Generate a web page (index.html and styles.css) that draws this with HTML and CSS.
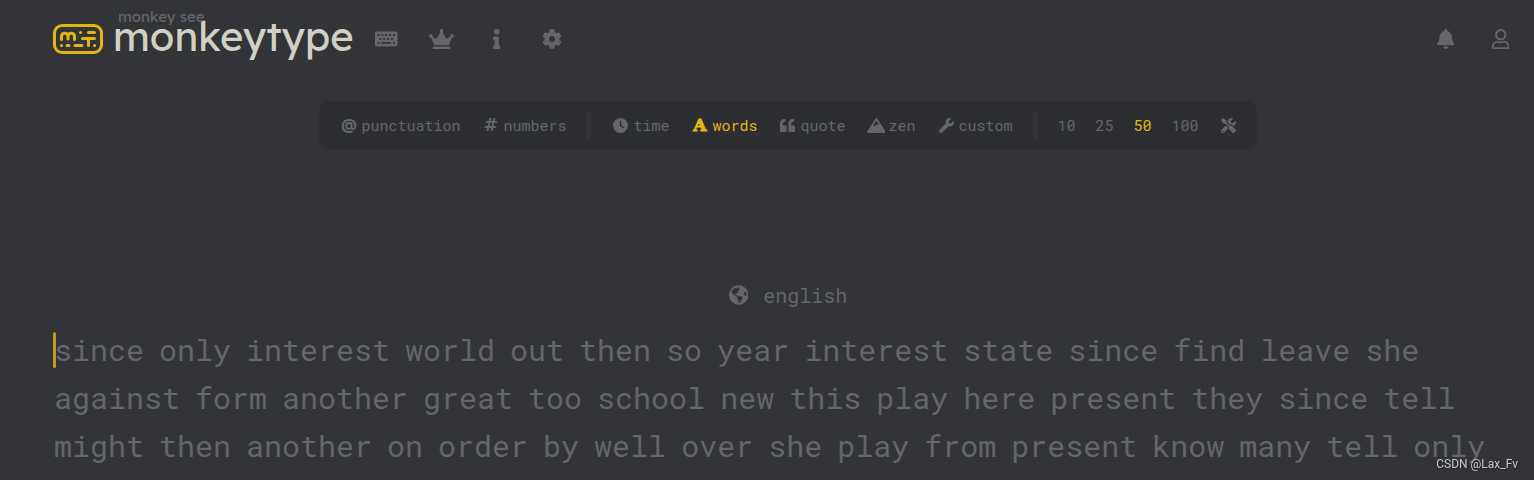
FILE: index.html
```html
<!DOCTYPE html>
<html lang="en">
<head>
    <meta charset="UTF-8">
    <title>Monkeytype</title>
    <meta name="viewport" content="width=device-width, initial-scale=1.0">
    <link rel="stylesheet" href="styles.css">
</head>
<body>

    <header>
        <a class="logo" href="#">
            <svg class="logo-icon" viewBox="0 0 50 30" width="50" height="30">
                <rect x="1.5" y="1.5" width="47" height="27" rx="7.5"/>
                <path d="M8.500 15.500V12a3.300 3.300 0 0 1 6.500 0V15M15 12a3.300 3.300 0 0 1 6.500 0v3.500M35.500 8.500H41.500M29.500 14.500h12M35.500 14.500V21.500M22 21.500h7M8.500 21.500h.1M14 21.500h.1M14 21.500h2M27.500 8.500h.1M41.500 21.500h.1"/>
            </svg>
            <span class="logo-text">
                <span class="top">monkey see</span>
                <span class="bottom">monkeytype</span>
            </span>
        </a>
        <nav>
            <button class="icon-button" aria-label="Start test">
                <svg viewBox="0 0 576 512" height="20"><path fill-rule="evenodd" d="M48 64h480a48 48 0 0 1 48 48v288a48 48 0 0 1-48 48H48a48 48 0 0 1-48-48V112a48 48 0 0 1 48-48zM65 130v50h50v-50zM163 130v50h50v-50zM262 130v50h50v-50zM360 130v50h50v-50zM459 130v50h50v-50zM114 230v50h50v-50zM212 230v50h50v-50zM311 230v50h50v-50zM410 230v50h50v-50zM65 330v50h50v-50zM163 330v50h247v-50zM459 330v50h50v-50z"/></svg>
            </button>
            <button class="icon-button" aria-label="Leaderboards">
                <svg viewBox="0 0 640 512" height="20"><path d="M528 448H112c-8.800 0-16 7.200-16 16v32c0 8.800 7.200 16 16 16h416c8.800 0 16-7.200 16-16v-32c0-8.800-7.200-16-16-16zm64-320c-26.500 0-48 21.500-48 48 0 7.100 1.600 13.700 4.400 19.800L476 239.200c-15.400 9.200-35.300 4-44.200-11.600L350.300 85C361 76.200 368 63 368 48c0-26.500-21.500-48-48-48s-48 21.500-48 48c0 15 7 28.200 17.700 37l-81.500 142.600c-8.900 15.600-28.900 20.800-44.200 11.600l-72.300-43.400c2.700-6 4.400-12.700 4.400-19.800 0-26.500-21.500-48-48-48S0 149.500 0 176s21.500 48 48 48c2.600 0 5.200-.4 7.700-.8L128 416h384l72.300-192.800c2.500.4 5.100.8 7.700.8 26.500 0 48-21.500 48-48s-21.500-48-48-48z"/></svg>
            </button>
            <button class="icon-button" aria-label="About">
                <svg viewBox="0 0 192 512" height="20"><circle cx="96" cy="72" r="72"/><rect y="192" width="152" height="88" rx="20"/><rect x="40" y="210" width="112" height="260"/><rect y="424" width="192" height="88" rx="20"/></svg>
            </button>
            <button class="icon-button" aria-label="Settings">
                <svg viewBox="0 0 512 512" height="20"><path d="M487.400 315.700l-42.600-24.600c4.300-23.200 4.300-47 0-70.200l42.600-24.600c4.900-2.800 7.100-8.600 5.500-14-11.100-35.600-30-67.800-54.700-94.600-3.800-4.100-10-5.100-14.800-2.300L380.800 110c-17.900-15.400-38.500-27.300-60.800-35.100V25.800c0-5.600-3.900-10.500-9.400-11.700-36.700-8.200-74.300-7.800-109.200 0-5.500 1.200-9.400 6.100-9.400 11.700V75c-22.200 7.900-42.800 19.800-60.800 35.100L88.700 85.500c-4.900-2.800-11-1.900-14.800 2.300-24.700 26.700-43.600 58.900-54.700 94.600-1.700 5.400.6 11.200 5.500 14L67.300 221c-4.300 23.200-4.300 47 0 70.200l-42.600 24.600c-4.900 2.800-7.100 8.600-5.500 14 11.100 35.600 30 67.800 54.700 94.600 3.800 4.100 10 5.100 14.800 2.300l42.600-24.600c17.900 15.400 38.500 27.300 60.800 35.100v49.200c0 5.600 3.900 10.500 9.400 11.700 36.700 8.200 74.300 7.800 109.200 0 5.500-1.200 9.400-6.100 9.400-11.700v-49.200c22.200-7.900 42.800-19.800 60.800-35.100l42.600 24.600c4.900 2.800 11 1.900 14.800-2.300 24.700-26.700 43.600-58.900 54.700-94.600 1.500-5.500-.7-11.300-5.600-14.100zM256 336c-44.100 0-80-35.900-80-80s35.900-80 80-80 80 35.900 80 80-35.900 80-80 80z"/></svg>
            </button>
        </nav>
        <div class="account">
            <button class="icon-button" aria-label="Notifications">
                <svg viewBox="0 0 448 512" height="20"><path d="M224 0c-17.700 0-32 14.300-32 32V51.200C119 66 64 130.600 64 208v18.800c0 47-17.300 92.400-48.500 127.600l-7.400 8.300c-8.400 9.400-10.400 22.900-5.300 34.400S19.400 416 32 416H416c12.600 0 24-7.400 29.200-18.900s3.100-25-5.300-34.400l-7.400-8.300C401.300 319.200 384 273.900 384 226.800V208c0-77.400-55-142-128-156.800V32c0-17.700-14.300-32-32-32zm45.300 493.300c12-12 18.700-28.300 18.700-45.300H224 160c0 17 6.700 33.300 18.700 45.300s28.300 18.700 45.300 18.700s33.300-6.700 45.300-18.700z"/></svg>
            </button>
            <button class="icon-button" aria-label="Account">
                <svg viewBox="0 0 448 512" height="20"><path d="M313.600 304c-28.700 0-42.500 16-89.600 16-47.100 0-60.800-16-89.600-16C60.200 304 0 364.200 0 438.400V464c0 26.500 21.500 48 48 48h352c26.500 0 48-21.500 48-48v-25.600c0-74.200-60.200-134.400-134.400-134.400zM400 464H48v-25.600c0-47.600 38.800-86.400 86.400-86.400 14.600 0 38.300 16 89.600 16 51.700 0 74.900-16 89.600-16 47.600 0 86.400 38.800 86.400 86.400V464zM224 288c79.500 0 144-64.500 144-144S303.500 0 224 0 80 64.500 80 144s64.500 144 144 144zm0-240c52.900 0 96 43.100 96 96s-43.100 96-96 96-96-43.100-96-96 43.100-96 96-96z"/></svg>
            </button>
        </div>
    </header>

    <main>
        <div class="config">
            <div class="group">
                <button><span class="icon at">@</span>punctuation</button>
                <button><span class="icon hash">#</span>numbers</button>
            </div>
            <div class="spacer"></div>
            <div class="group">
                <button><span class="icon"><svg viewBox="0 0 512 512" height="15"><path d="M256 0a256 256 0 1 1 0 512A256 256 0 1 1 256 0zM232 120V256c0 8 4 15.500 10.700 20l96 64c11 7.400 25.900 4.400 33.300-6.700s4.400-25.900-6.700-33.300L280 243.200V120c0-13.300-10.700-24-24-24s-24 10.700-24 24z"/></svg></span>time</button>
                <button class="active"><span class="icon slab">A</span>words</button>
                <button><span class="icon"><svg viewBox="0 0 512 512" height="15"><path d="M464 256h-80v-64c0-35.300 28.700-64 64-64h8c13.300 0 24-10.700 24-24V56c0-13.300-10.700-24-24-24h-8c-88.400 0-160 71.600-160 160v240c0 26.500 21.500 48 48 48h128c26.500 0 48-21.500 48-48V304c0-26.500-21.500-48-48-48zm-288 0H96v-64c0-35.300 28.700-64 64-64h8c13.300 0 24-10.700 24-24V56c0-13.300-10.700-24-24-24h-8C71.600 32 0 103.600 0 192v240c0 26.500 21.500 48 48 48h128c26.500 0 48-21.500 48-48V304c0-26.500-21.500-48-48-48z"/></svg></span>quote</button>
                <button><span class="icon"><svg viewBox="0 0 640 512" height="15"><path d="M634.900 462.700l-288-448C341 5.500 330.900 0 320 0s-21 5.500-26.900 14.700l-288 448a32 32 0 0 0-1.200 32.600A32 32 0 0 0 32 512h576c11.700 0 22.500-6.400 28.100-16.700a32 32 0 0 0-1.200-32.600zM320 91.200L405.400 224H320l-64 64-38-38L320 91.200z"/></svg></span>zen</button>
                <button><span class="icon"><svg viewBox="0 0 512 512" height="15"><path d="M507.700 109.100c-2.200-9-13.500-12.100-20.100-5.500l-74.400 74.400-67.900-11.300L334 98.800l74.400-74.400c6.600-6.600 3.400-17.900-5.700-20.200-47.400-11.700-99.500.9-136.500 37.900-39.700 39.700-50.600 97.100-34.100 147.200L18.700 402.800c-25 25-25 65.500 0 90.500s65.500 25 90.500 0l213.200-213.200c50.200 16.700 107.500 5.600 147.400-34.300 37.100-37 49.700-89.300 37.900-136.700zM64 472c-13.200 0-24-10.700-24-24s10.800-24 24-24 24 10.700 24 24-10.700 24-24 24z"/></svg></span>custom</button>
            </div>
            <div class="spacer"></div>
            <div class="group amounts">
                <button>10</button>
                <button>25</button>
                <button class="active">50</button>
                <button>100</button>
                <button aria-label="Custom amount"><span class="icon"><svg viewBox="0 0 512 512" height="15"><path d="M501.100 395.700L384 278.600c-23.100-23.100-57.600-27.600-85.400-13.900L192 158.100V96L64 0 0 64l96 128h62.100l106.600 106.600c-13.600 27.800-9.200 62.300 13.900 85.400l117.100 117.100c14.600 14.600 38.200 14.600 52.700 0l52.700-52.700c14.500-14.600 14.500-38.200 0-52.700zM331.700 225c28.300 0 54.900 11 74.900 31l19.400 19.400c15.800-6.900 30.800-16.500 43.800-29.500 37.100-37.100 49.700-89.300 37.900-136.700-2.200-9-13.500-12.100-20.100-5.500l-74.400 74.400-67.900-11.300L334 98.900l74.400-74.400c6.600-6.600 3.400-17.900-5.700-20.200-47.400-11.700-99.600.9-136.600 37.900-28.500 28.500-41.900 66.100-41.200 103.600l82.100 82.100c8.100-1.900 16.500-2.900 24.700-2.900zm-103.900 82l-56.700-56.700L18.700 402.800c-25 25-25 65.500 0 90.500s65.500 25 90.500 0l123.600-123.600c-7.600-19.900-9.900-41.600-5-62.700zM64 472c-13.200 0-24-10.800-24-24 0-13.300 10.700-24 24-24s24 10.700 24 24c0 13.200-10.700 24-24 24z"/></svg></span></button>
            </div>
        </div>

        <button class="language">
            <svg viewBox="0 0 496 512" height="20"><path d="M248 8C111 8 0 119 0 256s111 248 248 248 248-111 248-248S385 8 248 8zm82.300 357.600c-3.900 3.900-8 8-11.300 11.300-3 3-5.100 6.700-6.200 10.700-1.500 5.700-2.700 11.400-4.800 16.900l-17.400 46.800c-13.700 3-28 4.700-42.600 4.700v-27.400c1.700-12.600-7.600-36.200-22.600-51.200-6-6-9.400-14.100-9.400-22.600v-32c0-11.600-6.300-22.300-16.500-28-14.400-7.900-34.800-19-48.800-26.100-11.500-5.800-22.100-13.100-31.700-21.700l-.8-.7a115 115 0 0 1-18-20.800c-9.400-13.800-24.700-36.400-34.600-51.100 20.500-45.500 57.400-82.100 103.200-101.900l24 12C203.500 89.700 216 82 216 70.100V58.800c8-1.300 16.100-2.100 24.400-2.400l28.300 28.300c6.200 6.200 6.200 16.400 0 22.600L264 112l-10.300 10.300c-3.200 3.200-3.200 8.200 0 11.400l4.600 4.600c3.200 3.200 3.200 8.200 0 11.400l-8 8a8 8 0 0 1-5.600 2.300h-9c-2.100 0-4.100.8-5.600 2.300l-9.900 9.600a8 8 0 0 0-1.600 9.300l15.600 31.200c2.700 5.300-1.200 11.600-7.100 11.600h-5.700c-1.900 0-3.800-.7-5.200-2l-9.300-8a16 16 0 0 0-15.500-3.100l-31.200 10.400a12 12 0 0 0-1.600 22l11.100 5.600c9.400 4.700 19.800 7.100 30.300 7.100s22.600 27.300 32 32h66.800c8.500 0 16.600 3.400 22.600 9.400l13.700 13.700a30.500 30.500 0 0 1 8.900 21.500 46.500 46.500 0 0 1-13.700 33zM417 274.200c-5.800-1.400-10.800-5-14.100-10l-18-26.900a24 24 0 0 1 0-26.600l19.600-29.400c2.300-3.500 5.500-6.300 9.200-8.200l13-6.500C440.200 193.600 448 223.900 448 256c0 8.700-.7 17.200-1.800 25.500L417 274.200z"/></svg>
            english
        </button>

        <div id="words" class="words"></div>
    </main>

    <div class="watermark">CSDN @Lax_Fv</div>

    <script>
        const lines = [
            "since only interest world out then so year interest state since find leave she",
            "against form another great too school new this play here present they since tell",
            "might then another on order by well over she play from present know many tell only"
        ];
        const words = document.getElementById("words");

        const caret = document.createElement("div");
        caret.className = "caret";
        words.appendChild(caret);

        for (let line of lines) {
            const row = document.createElement("div");
            row.className = "line";
            for (let word of line.split(" ")) {
                const el = document.createElement("span");
                el.textContent = word;
                row.appendChild(el);
            }
            words.appendChild(row);
        }
    </script>
</body>
</html>
```
FILE: styles.css
```css
:root {
    --bg: #323437;
    --main: #e2b714;
    --sub: #646669;
    --sub-alt: #2c2e31;
    --text: #d1d0c5;
    --mono: "Roboto Mono", "Liberation Mono", monospace;
}
* {
    box-sizing: border-box;
}
body {
    margin: 0;
    background: var(--bg);
    color: var(--sub);
    font-family: var(--mono);
    overflow: hidden;
}
button {
    border: 0;
    padding: 0;
    background: none;
    color: inherit;
    font-family: inherit;
    cursor: pointer;
}
svg {
    display: block;
    flex-shrink: 0;
    fill: currentColor;
}
header {
    display: flex;
    align-items: center;
    height: 77px;
    padding: 0 6px 0 53px;
}
.logo {
    display: flex;
    align-items: center;
    gap: 10px;
    width: 306px;
    text-decoration: none;
}
.logo-icon {
    fill: none;
    stroke: var(--main);
    stroke-width: 3;
    stroke-linecap: round;
    stroke-linejoin: round;
}
.logo-text {
    position: relative;
    padding-bottom: 6px;
    font-family: "Lexend Deca", Lato, sans-serif;
    color: var(--text);
}
.logo-text .top {
    position: absolute;
    top: -4px;
    left: 5px;
    font-size: 15px;
    line-height: 20px;
    white-space: nowrap;
    color: var(--sub);
}
.logo-text .bottom {
    display: block;
    font-size: 40px;
    line-height: 50px;
}
nav, .account {
    display: flex;
}
.account {
    margin-left: auto;
}
.icon-button {
    display: flex;
    align-items: center;
    justify-content: center;
    width: 55px;
    height: 40px;
}
main {
    display: flex;
    flex-direction: column;
    align-items: center;
    padding: 24px 11px 0 53px;
}
.config {
    display: flex;
    align-items: center;
    gap: 10px;
    height: 48px;
    padding: 0 9px 0 10px;
    border-radius: 10px;
    background: var(--sub-alt);
}
.group {
    display: flex;
    gap: 1px;
}
.amounts {
    gap: 0;
}
.config button {
    display: flex;
    align-items: center;
    gap: 3px;
    height: 48px;
    padding: 0 10px;
    font-size: 15px;
    line-height: 20px;
}
.config .active {
    color: var(--main);
}
.icon {
    display: flex;
    justify-content: center;
    width: 19px;
}
.at {
    font-family: Inter, sans-serif;
    font-weight: 800;
}
.hash {
    font-family: "DejaVu Sans", sans-serif;
    font-size: 17px;
    font-weight: 700;
}
.slab {
    font-family: "DejaVu Serif", serif;
    font-size: 17px;
    font-weight: 700;
    -webkit-text-stroke: 1px currentColor;
}
.spacer {
    width: 5px;
    height: 28px;
    border-radius: 3px;
    background: var(--bg);
}
.language {
    display: flex;
    align-items: center;
    gap: 15px;
    margin-top: 132px;
    font-size: 20px;
    line-height: 28px;
}
.words {
    position: relative;
    align-self: stretch;
    margin-top: 17px;
    padding-left: 1px;
    font-size: 30px;
    line-height: 48px;
}
.line {
    display: flex;
    gap: 15px;
}
.caret {
    position: absolute;
    top: 6px;
    left: 0;
    width: 3px;
    height: 36px;
    border-radius: 2px;
    background: var(--main);
    opacity: 0.8;
}
.watermark {
    position: fixed;
    right: 16px;
    bottom: 8px;
    font-family: Roboto, sans-serif;
    font-size: 12px;
    line-height: 16px;
    color: #c8c8c8;
    text-shadow: 1px 1px 1px #222;
}
```
